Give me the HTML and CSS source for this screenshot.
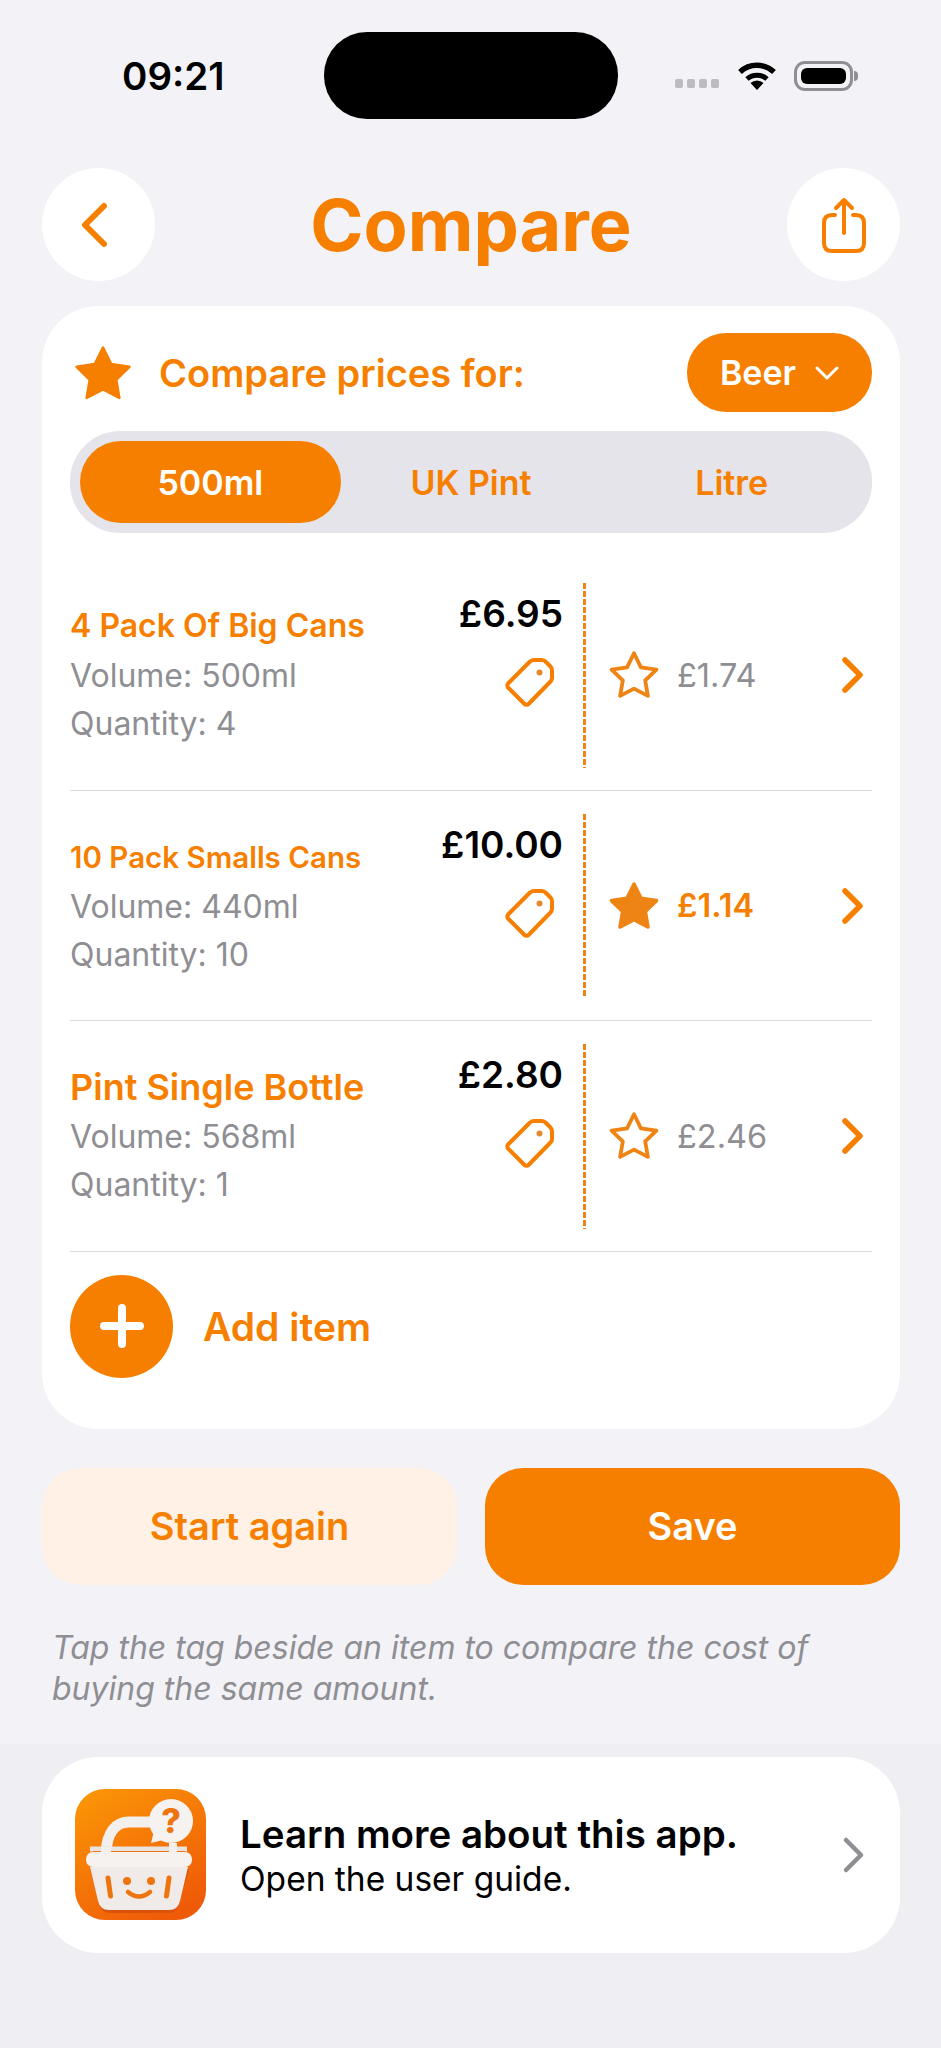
FILE: index.html
```html
<!DOCTYPE html>
<html lang="en">
<head>
    <meta charset="UTF-8">
    <meta name="viewport" content="width=device-width, initial-scale=1.0">
    <title>Compare</title>
    <link rel="stylesheet" href="styles.css">
</head>
<body>
    <div class="status-bar">
        <span class="time">09:21</span>
        <div class="island"></div>
        <div class="status-icons">
            <div class="signal"><i></i><i></i><i></i><i></i></div>
            <svg class="wifi" viewBox="0 0 40 29" width="40" height="29">
                <path d="M3 11A25 25 0 0 1 37 11" fill="none" stroke="#000" stroke-width="5.5"/>
                <path d="M10 18A15 15 0 0 1 30 18" fill="none" stroke="#000" stroke-width="5"/>
                <path d="M20 29L13.5 22A9.5 9.5 0 0 1 26.5 22Z" fill="#000"/>
            </svg>
            <div class="battery"><div class="battery-fill"></div></div>
            <div class="battery-nub"></div>
        </div>
    </div>

    <div class="page-header">
        <button class="round-btn">
            <svg class="back-icon" viewBox="0 0 27 46" width="27" height="46"><path d="M23 4L4 23L23 42" class="line" stroke-width="6"/></svg>
        </button>
        <h1>Compare</h1>
        <button class="round-btn">
            <svg viewBox="0 0 44 56" width="44" height="56">
                <path d="M13 18H10Q2 18 2 26V46Q2 54 10 54H34Q42 54 42 46V26Q42 18 34 18H31" class="line" stroke-width="4"/>
                <path d="M22 3V36M14 11L22 3L30 11" class="line" stroke-width="4"/>
            </svg>
        </button>
    </div>

    <div class="card">
        <div class="card-head">
            <svg class="head-star" viewBox="1.4 1.4 21.2 20.4" width="56" height="54"><polygon points="12,2 15.09,8.26 22,9.27 17,14.14 18.18,21.02 12,17.77 5.82,21.02 7,14.14 2,9.27 8.91,8.26" fill="#f77f00" stroke="#f77f00" stroke-width="1" stroke-linejoin="round"/></svg>
            <span class="head-title">Compare prices for:</span>
            <button class="beer-pill">Beer
                <svg viewBox="0 0 24 14" width="24" height="14"><path d="M2 2L12 12L22 2" fill="none" stroke="#fff" stroke-width="3" stroke-linecap="round" stroke-linejoin="round"/></svg>
            </button>
        </div>

        <div class="segments">
            <div class="segment active">500ml</div>
            <div class="segment">UK Pint</div>
            <div class="segment">Litre</div>
        </div>

        <div class="item-row">
            <div class="item-info">
                <div class="item-name">4 Pack Of Big Cans</div>
                <div class="item-detail">Volume: 500ml</div>
                <div class="item-detail">Quantity: 4</div>
            </div>
            <div class="item-price">
                <span class="price">£6.95</span>
                <svg class="tag" viewBox="0 0 49 50" width="49" height="50"><path d="M3.5 25L25 3.5Q27 2 29 2H37Q39 2 41 4L45 8Q47 10 47 12V20Q47 22 45.5 23.5L24 45.5Q21.5 48 19 45.5L3.5 30Q1 27.5 3.5 25Z" class="line" stroke-width="4"/><circle cx="34.5" cy="14.5" r="3" fill="#e58a2c"/></svg>
            </div>
            <div class="divider"></div>
            <div class="unit">
                <svg class="star" viewBox="1 1 22 21.4" width="50" height="48"><polygon points="12,2 15.09,8.26 22,9.27 17,14.14 18.18,21.02 12,17.77 5.82,21.02 7,14.14 2,9.27 8.91,8.26" fill="none" stroke="#ee8414" stroke-width="1.7" stroke-linejoin="round"/></svg>
                <span class="unit-price">£1.74</span>
                <svg class="chevron" viewBox="0 0 23 38" width="23" height="38"><path d="M4 4L19 19L4 34" class="line" stroke-width="5.5"/></svg>
            </div>
        </div>

        <div class="item-row">
            <div class="item-info">
                <div class="item-name small">10 Pack Smalls Cans</div>
                <div class="item-detail">Volume: 440ml</div>
                <div class="item-detail">Quantity: 10</div>
            </div>
            <div class="item-price">
                <span class="price">£10.00</span>
                <svg class="tag" viewBox="0 0 49 50" width="49" height="50"><path d="M3.5 25L25 3.5Q27 2 29 2H37Q39 2 41 4L45 8Q47 10 47 12V20Q47 22 45.5 23.5L24 45.5Q21.5 48 19 45.5L3.5 30Q1 27.5 3.5 25Z" class="line" stroke-width="4"/><circle cx="34.5" cy="14.5" r="3" fill="#e58a2c"/></svg>
            </div>
            <div class="divider"></div>
            <div class="unit">
                <svg class="star" viewBox="1 1 22 21.4" width="50" height="48"><polygon points="12,2 15.09,8.26 22,9.27 17,14.14 18.18,21.02 12,17.77 5.82,21.02 7,14.14 2,9.27 8.91,8.26" fill="#ee8414" stroke="#ee8414" stroke-width="1.7" stroke-linejoin="round"/></svg>
                <span class="unit-price best">£1.14</span>
                <svg class="chevron" viewBox="0 0 23 38" width="23" height="38"><path d="M4 4L19 19L4 34" class="line" stroke-width="5.5"/></svg>
            </div>
        </div>

        <div class="item-row">
            <div class="item-info">
                <div class="item-name large">Pint Single Bottle</div>
                <div class="item-detail">Volume: 568ml</div>
                <div class="item-detail">Quantity: 1</div>
            </div>
            <div class="item-price">
                <span class="price">£2.80</span>
                <svg class="tag" viewBox="0 0 49 50" width="49" height="50"><path d="M3.5 25L25 3.5Q27 2 29 2H37Q39 2 41 4L45 8Q47 10 47 12V20Q47 22 45.5 23.5L24 45.5Q21.5 48 19 45.5L3.5 30Q1 27.5 3.5 25Z" class="line" stroke-width="4"/><circle cx="34.5" cy="14.5" r="3" fill="#e58a2c"/></svg>
            </div>
            <div class="divider"></div>
            <div class="unit">
                <svg class="star" viewBox="1 1 22 21.4" width="50" height="48"><polygon points="12,2 15.09,8.26 22,9.27 17,14.14 18.18,21.02 12,17.77 5.82,21.02 7,14.14 2,9.27 8.91,8.26" fill="none" stroke="#ee8414" stroke-width="1.7" stroke-linejoin="round"/></svg>
                <span class="unit-price">£2.46</span>
                <svg class="chevron" viewBox="0 0 23 38" width="23" height="38"><path d="M4 4L19 19L4 34" class="line" stroke-width="5.5"/></svg>
            </div>
        </div>

        <div class="add-row">
            <div class="add-circle">
                <svg viewBox="0 0 44 44" width="44" height="44"><path d="M22 4V40M4 22H40" fill="none" stroke="#fff" stroke-width="8" stroke-linecap="round"/></svg>
            </div>
            <span class="add-label">Add item</span>
        </div>
    </div>

    <div class="actions">
        <button class="action soft">Start again</button>
        <button class="action solid">Save</button>
    </div>

    <p class="hint">Tap the tag beside an item to compare the cost of buying the same amount.</p>

    <div class="bottom">
        <div class="guide-card">
            <svg class="app-icon" viewBox="0 0 131 131" width="131" height="131">
                <defs>
                    <linearGradient id="iconBg" x1="0.1" y1="0" x2="0.7" y2="1">
                        <stop offset="0" stop-color="#fb9606"/>
                        <stop offset="1" stop-color="#ef5a08"/>
                    </linearGradient>
                </defs>
                <rect width="131" height="131" rx="30" fill="url(#iconBg)"/>
                <!-- shadow under the basket -->
                <path d="M15 80L24 115Q26 124 35 124H93Q102 124 104 115L114 80Z" fill="#d9540a"/>
                <path d="M31 64C32 43 41 33 54 33H80" fill="none" stroke="#f3efec" stroke-width="11" stroke-linecap="round"/>
                <path d="M15 60H112" fill="none" stroke="#e9e3df" stroke-width="5"/>
                <path d="M98 54V68" fill="none" stroke="#f3efec" stroke-width="8"/>
                <path d="M18 62H110V70H18Z" fill="#ee7410"/>
                <path d="M31 58V68" fill="none" stroke="#f3efec" stroke-width="10"/>
                <path d="M98 58V68" fill="none" stroke="#f3efec" stroke-width="8"/>
                <circle cx="96" cy="32" r="22" fill="#f6f2f0"/>
                <path d="M79 42L76 54L92 50Z" fill="#f6f2f0"/>
                <text x="96" y="44" class="icon-q">?</text>
                <path d="M15 78L23 112Q25 121 34 121H94Q103 121 105 112L113 78Z" fill="#f0ebe8"/>
                <rect x="11" y="63" width="106" height="15" rx="7" fill="#f6f2f0"/>
                <path d="M33 89L35.5 107" stroke="#ee7410" stroke-width="5" stroke-linecap="round" fill="none"/>
                <path d="M94 89L91.5 107" stroke="#ee7410" stroke-width="5" stroke-linecap="round" fill="none"/>
                <circle cx="52" cy="92" r="4" fill="#ee7410"/>
                <circle cx="76" cy="92" r="4" fill="#ee7410"/>
                <path d="M53 103Q64 112 75 103" stroke="#ee7410" stroke-width="4.5" stroke-linecap="round" fill="none"/>
            </svg>
            <div class="guide-text">
                <div class="guide-title">Learn more about this app.</div>
                <div class="guide-sub">Open the user guide.</div>
            </div>
            <svg class="guide-chevron" viewBox="0 0 23 38" width="23" height="38"><path d="M4 4L19 19L4 34" fill="none" stroke="#8e8e93" stroke-width="4.5" stroke-linecap="round" stroke-linejoin="round"/></svg>
        </div>
    </div>
</body>
</html>
```

FILE: styles.css
```css
* {
    box-sizing: border-box;
}

body {
    margin: 0;
    width: 941px;
    height: 2048px;
    overflow: hidden;
    display: flex;
    flex-direction: column;
    background-color: #f2f2f7;
    font-family: Inter, "Liberation Sans", sans-serif;
    color: #f77f00;
}

button {
    font-family: inherit;
    border: none;
    cursor: pointer;
}

.line {
    fill: none;
    stroke: #f77f00;
    stroke-linecap: round;
    stroke-linejoin: round;
}

/* status bar */
.status-bar {
    display: grid;
    grid-template-columns: 1fr 294px 1fr;
    height: 87px;
    margin-top: 32px;
    align-items: center;
}

.time {
    padding-left: 122px;
    font-size: 38.5px;
    font-weight: 600;
    color: #000;
}

.island {
    height: 87px;
    border-radius: 43px;
    background-color: #000;
}

.status-icons {
    display: flex;
    align-items: center;
    padding-left: 57px;
}

.signal {
    display: flex;
    gap: 4px;
    margin-top: 16px;
    margin-right: 18px;
}

.signal i {
    width: 8px;
    height: 9px;
    border-radius: 2px;
    background-color: #bcbcc0;
}

.wifi {
    margin-right: 17px;
}

.battery {
    width: 59px;
    height: 30px;
    padding: 4px;
    border: 3px solid #8f8f93;
    border-radius: 11px;
}

.battery-fill {
    height: 100%;
    border-radius: 6px;
    background-color: #000;
}

.battery-nub {
    width: 4px;
    height: 10px;
    margin-left: 1px;
    border-radius: 0 4px 4px 0;
    background-color: #8f8f93;
}

/* header */
.page-header {
    display: flex;
    justify-content: space-between;
    align-items: center;
    height: 113px;
    margin: 49px 41px 0 42px;
}

.page-header h1 {
    margin: 0;
    font-size: 72px;
    font-weight: 700;
}

.round-btn {
    display: flex;
    align-items: center;
    justify-content: center;
    width: 113px;
    height: 113px;
    padding: 0;
    border-radius: 50%;
    background-color: #fff;
}

.back-icon {
    margin-right: 8px;
}

/* main card */
.card {
    margin: 25px 41px 0 42px;
    padding: 27px 28px 0;
    border-radius: 56px;
    background-color: #fff;
}

.card-head {
    display: flex;
    align-items: center;
    height: 79px;
}

.head-star {
    margin-left: 5px;
    margin-right: 28px;
}

.head-title {
    flex: 1;
    font-size: 38px;
    font-weight: 600;
}

.beer-pill {
    display: flex;
    align-items: center;
    justify-content: center;
    gap: 19px;
    width: 185px;
    height: 79px;
    padding: 0;
    border-radius: 39px;
    background-color: #f77f00;
    color: #fff;
    font-size: 34px;
    font-weight: 600;
}

.segments {
    display: grid;
    grid-template-columns: repeat(3, 1fr);
    height: 102px;
    margin-top: 19px;
    padding: 10px;
    border-radius: 50px;
    background-color: #e4e4ea;
}

.segment {
    display: flex;
    align-items: center;
    justify-content: center;
    border-radius: 41px;
    font-size: 34px;
    font-weight: 600;
}

.segment.active {
    background-color: #f77f00;
    color: #fff;
}

.item-row {
    display: flex;
    height: 230.5px;
    border-bottom: 1px solid #d9d9de;
}

.segments + .item-row {
    margin-top: 27px;
}

.item-info {
    flex: 1;
    padding-top: 42px;
}

.item-name {
    height: 48px;
    margin-bottom: 2px;
    line-height: 48px;
    font-size: 32px;
    font-weight: 600;
    white-space: nowrap;
}

.item-name.small {
    font-size: 29.5px;
}

.item-name.large {
    font-size: 36px;
}

.item-detail {
    height: 48px;
    line-height: 48px;
    font-size: 32px;
    color: #8e8e93;
}

.item-price {
    display: flex;
    flex-direction: column;
    align-items: flex-end;
    padding-top: 30px;
}

.price {
    height: 48px;
    line-height: 48px;
    font-size: 37px;
    font-weight: 600;
    color: #000;
}

.tag {
    margin-top: 20px;
    margin-right: 9px;
}

.divider {
    flex-shrink: 0;
    width: 3px;
    margin: 23px 20px 22px 20px;
    background: repeating-linear-gradient(#ee8414 0 6px, transparent 6px 8px);
}

.unit {
    display: flex;
    flex-shrink: 0;
    align-items: center;
    width: 266px;
    height: 230px;
    padding-left: 3px;
}

.unit-price {
    flex: 1;
    margin-left: 18px;
    font-size: 32.5px;
    color: #8e8e93;
}

.unit-price.best {
    color: #f77f00;
    font-weight: 600;
}

.chevron {
    margin-right: 8px;
}

.add-row {
    display: flex;
    align-items: center;
    gap: 30px;
    padding: 23px 0 51px;
}

.add-circle {
    display: flex;
    align-items: center;
    justify-content: center;
    width: 103px;
    height: 103px;
    border-radius: 50%;
    background-color: #f77f00;
}

.add-label {
    font-size: 39px;
    font-weight: 600;
}

/* buttons under the card */
.actions {
    display: flex;
    gap: 28px;
    margin: 39px 41px 0 42px;
}

.action {
    flex: 1;
    height: 117px;
    border-radius: 38px;
    font-size: 38px;
    font-weight: 600;
}

.action.soft {
    background-color: #fff1e6;
    color: #f77f00;
}

.action.solid {
    background-color: #f77f00;
    color: #fff;
}

.hint {
    margin: 42px 52px 0;
    font-size: 32px;
    font-style: italic;
    line-height: 41px;
    color: #8e8e93;
}

/* bottom section */
.bottom {
    flex: 1;
    margin-top: 35px;
    padding: 13px 41px 0 42px;
    background-color: #eeeef3;
}

.guide-card {
    display: flex;
    align-items: center;
    height: 196px;
    padding: 0 35px 0 33px;
    border-radius: 56px;
    background-color: #fff;
}

.app-icon {
    flex-shrink: 0;
}

.icon-q {
    font-size: 34px;
    font-weight: 800;
    fill: #ee7410;
    text-anchor: middle;
}

.guide-text {
    flex: 1;
    margin-left: 34px;
    color: #000;
}

.guide-title {
    font-size: 38.5px;
    font-weight: 600;
    line-height: 48px;
}

.guide-sub {
    font-size: 33.5px;
    line-height: 42px;
}
```
